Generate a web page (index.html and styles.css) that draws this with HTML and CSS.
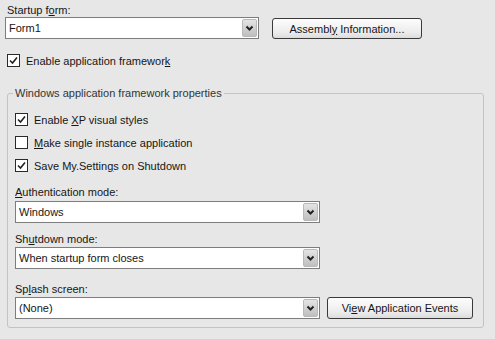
FILE: index.html
```html
<!DOCTYPE html>
<html>
<head>
<meta charset="utf-8">
<link rel="stylesheet" href="styles.css">
</head>
<body>
<div class="page">
  <div class="label top-label">Startup f<u>o</u>rm:</div>
  <div class="row startup-row">
    <div class="combo startup-combo">
      <span class="value">Form1</span>
      <span class="arrow"><svg width="13" height="16" viewBox="0 0 13 16"><path d="M3.5 6.5 L6.5 9.5 L9.5 6.5" fill="none" stroke="#222" stroke-width="2"/></svg></span>
    </div>
    <div class="btn assembly-btn"><span>Assembl<u>y</u> Information...</span></div>
  </div>
  <div class="check top-check">
    <span class="box"><svg width="11" height="11" viewBox="0 0 11 11"><path d="M2 5.5 L4.5 8 L9 2.5" fill="none" stroke="#222" stroke-width="1.6"/></svg></span>
    <span>Enable application framewor<u>k</u></span>
  </div>
  <fieldset class="group">
    <legend>Windows application framework properties</legend>
    <div class="check">
      <span class="box"><svg width="11" height="11" viewBox="0 0 11 11"><path d="M2 5.5 L4.5 8 L9 2.5" fill="none" stroke="#222" stroke-width="1.6"/></svg></span>
      <span>Enable <u>X</u>P visual styles</span>
    </div>
    <div class="check">
      <span class="box"></span>
      <span><u>M</u>ake single instance application</span>
    </div>
    <div class="check">
      <span class="box"><svg width="11" height="11" viewBox="0 0 11 11"><path d="M2 5.5 L4.5 8 L9 2.5" fill="none" stroke="#222" stroke-width="1.6"/></svg></span>
      <span>Save My.Settin<u>g</u>s on Shutdown</span>
    </div>
    <div class="label auth-label"><u>A</u>uthentication mode:</div>
    <div class="combo wide-combo auth-combo">
      <span class="value">Windows</span>
      <span class="arrow"><svg width="13" height="16" viewBox="0 0 13 16"><path d="M3.5 6.5 L6.5 9.5 L9.5 6.5" fill="none" stroke="#222" stroke-width="2"/></svg></span>
    </div>
    <div class="label shut-label">Sh<u>u</u>tdown mode:</div>
    <div class="combo wide-combo shut-combo">
      <span class="value">When startup form closes</span>
      <span class="arrow"><svg width="13" height="16" viewBox="0 0 13 16"><path d="M3.5 6.5 L6.5 9.5 L9.5 6.5" fill="none" stroke="#222" stroke-width="2"/></svg></span>
    </div>
    <div class="label splash-label">Sp<u>l</u>ash screen:</div>
    <div class="row splash-row">
      <div class="combo wide-combo">
        <span class="value">(None)</span>
        <span class="arrow"><svg width="13" height="16" viewBox="0 0 13 16"><path d="M3.5 6.5 L6.5 9.5 L9.5 6.5" fill="none" stroke="#222" stroke-width="2"/></svg></span>
      </div>
      <div class="btn events-btn"><span>Vi<u>e</u>w Application Events</span></div>
    </div>
  </fieldset>
</div>
</body>
</html>
```

FILE: styles.css
```css
html, body {
  margin: 0;
  padding: 0;
  background: #e7e7e7;
}
body {
  width: 495px;
  height: 339px;
  overflow: hidden;
  font-family: "Liberation Sans", Arial, sans-serif;
  font-size: 11px;
  color: #161616;
}
u {
  text-decoration: underline;
  text-underline-offset: 1px;
}
.page {
  padding: 3px 11px 0 5px;
}
.label {
  line-height: 14px;
  height: 14px;
  white-space: nowrap;
}
.top-label {
  margin-left: 2px;
}
.row {
  display: flex;
  align-items: center;
}
.combo {
  display: flex;
  align-items: center;
  box-sizing: border-box;
  height: 22px;
  border: 1px solid #7d7d7d;
  background: #fff;
}
.combo .value {
  flex: 1;
  padding-left: 3px;
  line-height: 20px;
  white-space: nowrap;
}
.combo .arrow {
  width: 15px;
  height: 18px;
  margin-right: 1px;
  box-sizing: border-box;
  border: 1px solid #b9b9b9;
  border-radius: 2px;
  background: linear-gradient(#e4e4e4, #bfbfbf);
  display: flex;
  align-items: center;
  justify-content: center;
}
.combo .arrow svg {
  display: block;
}
.startup-combo {
  width: 254px;
}
.btn {
  box-sizing: border-box;
  height: 21px;
  border: 1px solid #3a3a3a;
  border-radius: 3px;
  background: linear-gradient(#fdfdfd, #ececec 70%, #dcdcdc);
  display: flex;
  align-items: center;
  justify-content: center;
  white-space: nowrap;
}
.assembly-btn {
  width: 150px;
  margin-left: 13px;
  margin-top: 1px;
}
.check {
  display: flex;
  align-items: center;
  height: 17px;
  gap: 6px;
  white-space: nowrap;
}
.check .box {
  box-sizing: border-box;
  width: 13px;
  height: 13px;
  border: 1px solid #2a2a2a;
  background: #fff;
  display: flex;
  align-items: center;
  justify-content: center;
}
.check .box svg {
  display: block;
}
.top-check {
  margin: 13px 0 0 2px;
}
.group {
  margin: 17px 0 0 2px;
  padding: 11px 7px 8px 7px;
  border: 1px solid #c3c3c3;
  border-radius: 3px;
  min-width: 0;
}
.group legend {
  padding: 0 2px;
  margin-left: -2px;
  line-height: 14px;
  color: #333;
}
.group .check + .check {
  margin-top: 6px;
}
.auth-label {
  margin-top: 11px;
}
.auth-combo {
  margin-top: 2px;
}
.shut-label {
  margin-top: 9px;
}
.shut-combo {
  margin-top: 1px;
}
.splash-label {
  margin-top: 13px;
}
.splash-row {
  margin-top: 1px;
}
.wide-combo {
  width: 305px;
}
.events-btn {
  width: 146px;
  height: 22px;
  margin-left: 7px;
}
```
